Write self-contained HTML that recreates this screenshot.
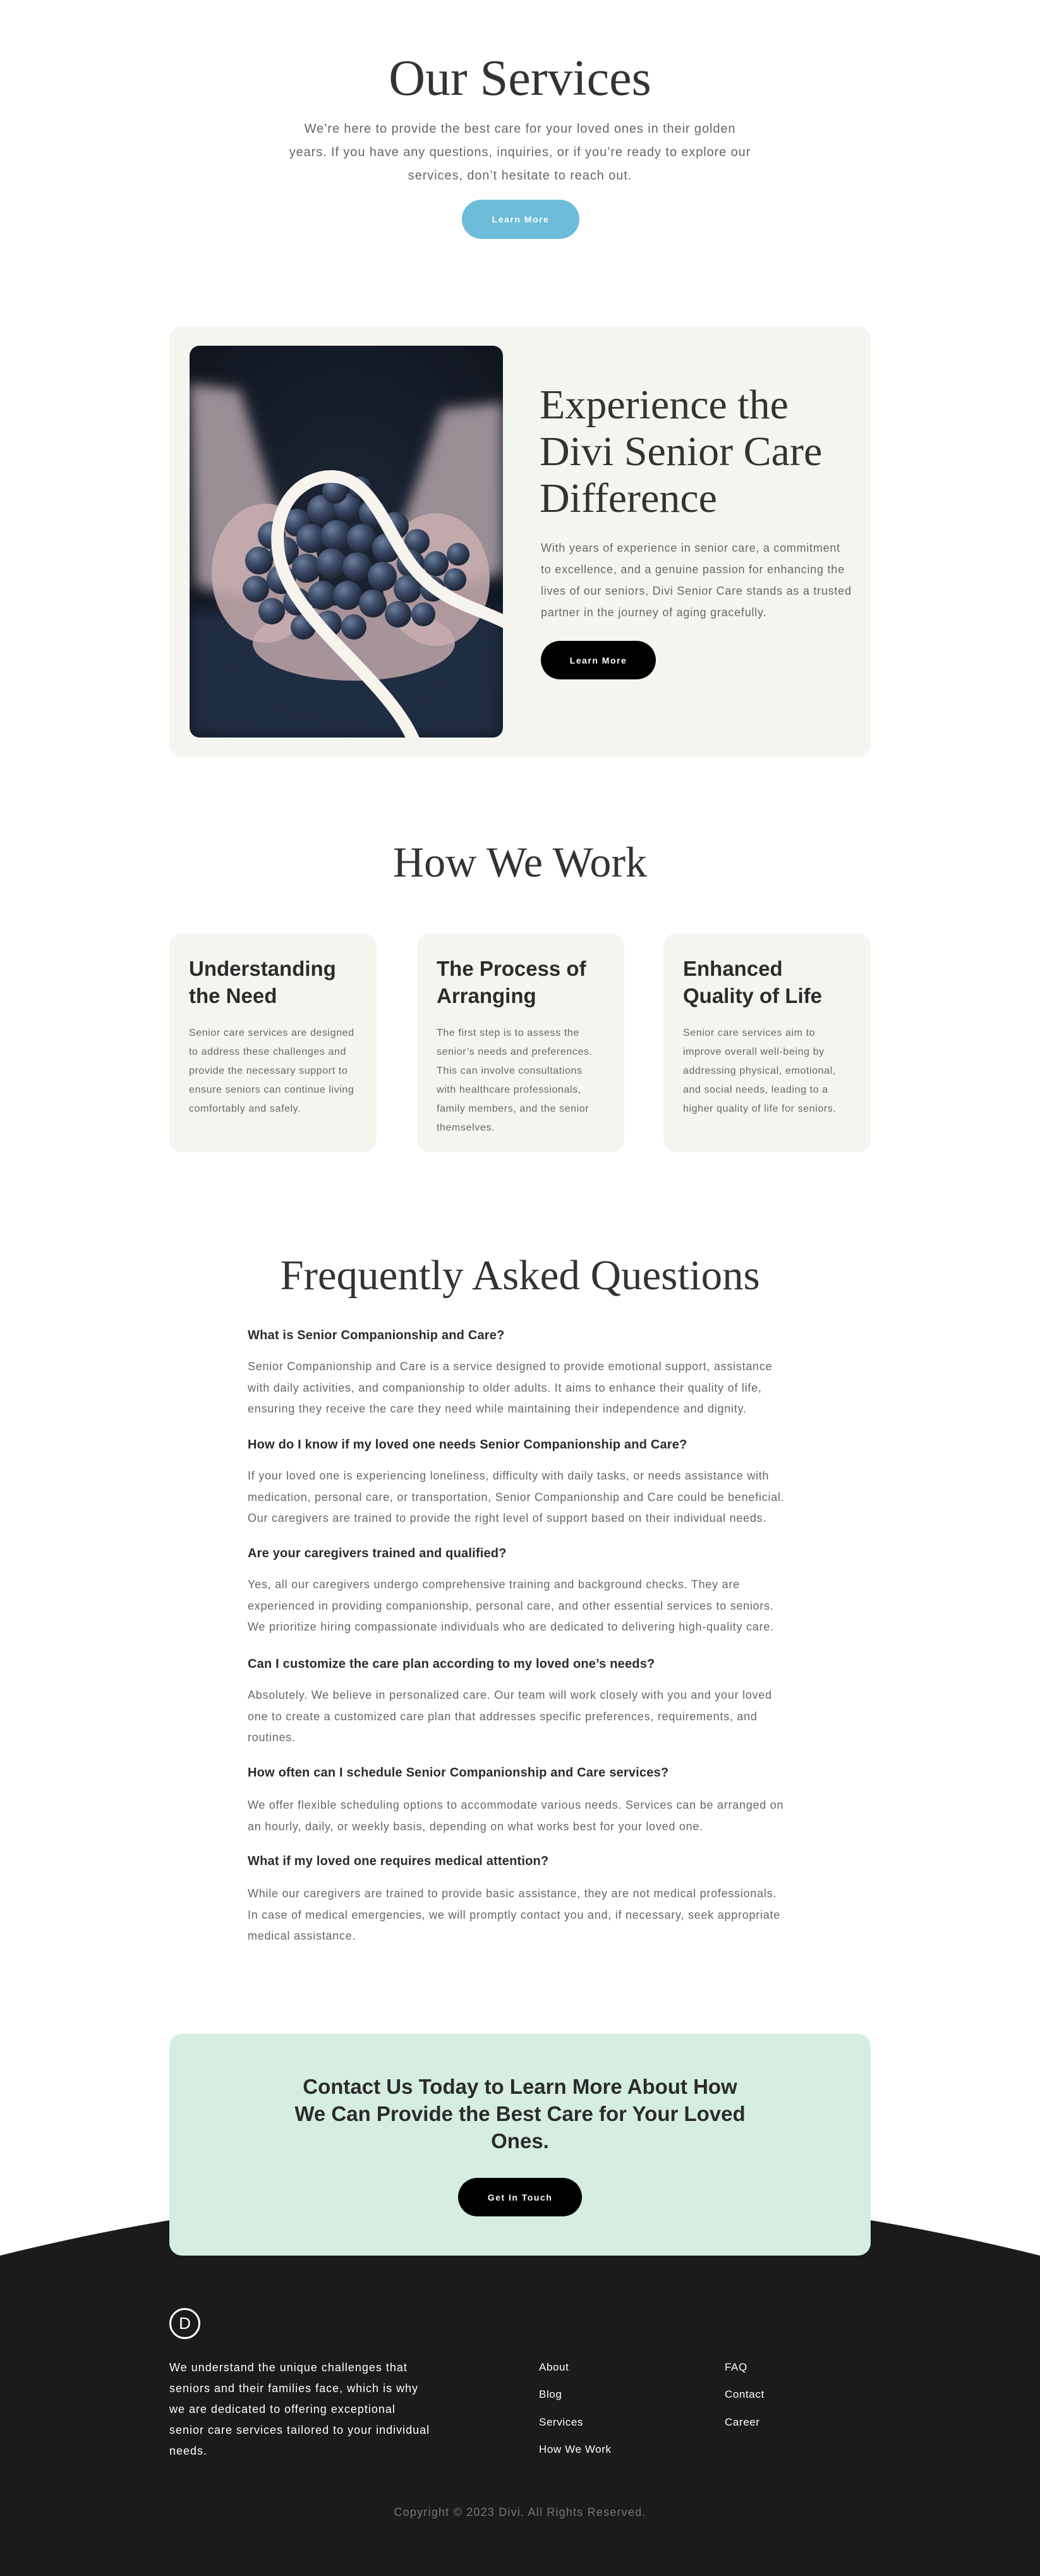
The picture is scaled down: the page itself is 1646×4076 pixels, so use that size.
<!DOCTYPE html>
<html><head><meta charset="utf-8">
<style>
*{margin:0;padding:0;box-sizing:border-box}
html,body{width:1646px;height:4076px;background:#fff;overflow:hidden}
body{position:relative;font-family:"Liberation Sans",sans-serif;color:#333}
.a{position:absolute}
.serif{font-family:"Liberation Serif",serif;font-weight:normal;color:#333}
.c{text-align:center}
.btn{position:absolute;border-radius:31px;color:#fff;font-weight:bold;font-size:14px;letter-spacing:1.5px;display:flex;align-items:center;justify-content:center}
.p{color:#666}
.card{position:absolute;top:1477px;width:328px;height:346px;background:#f5f5f0;border-radius:20px;padding:30px 31px}
.card h3{font-size:33px;font-weight:600;line-height:43px;color:#2b2b2b;margin-top:4px;white-space:nowrap}
.card p{font-size:16px;line-height:30px;color:#666;margin-top:23px;letter-spacing:0.6px;white-space:nowrap}
.q{position:absolute;left:392px;font-size:20px;font-weight:bold;color:#2b2b2b;line-height:24px;letter-spacing:0.2px}
.ans{position:absolute;left:392px;font-size:18px;line-height:33.5px;color:#666;white-space:nowrap;letter-spacing:0.75px}
.fl{position:absolute;color:#fff;font-size:17px;line-height:20px;letter-spacing:0.6px}
</style></head><body>

<div class="a serif c" style="left:0;width:1646px;top:74px;font-size:80px;line-height:100px">Our Services</div>
<div class="a p c" style="left:0;width:1646px;top:186px;font-size:20px;line-height:37px;letter-spacing:0.9px">We’re here to provide the best care for your loved ones in their golden<br>years. If you have any questions, inquiries, or if you’re ready to explore our<br>services, don’t hesitate to reach out.</div>
<div class="btn" style="left:731px;top:316px;width:186px;height:62px;background:#6dbcd9">Learn More</div>

<div class="a" style="left:268px;top:517px;width:1110px;height:681px;background:#f5f5f0;border-radius:20px"></div>
<svg class="a" style="left:300px;top:547px" width="496" height="620" viewBox="0 0 496 620">
<defs>
<clipPath id="cp"><rect width="496" height="620" rx="16"/></clipPath>
<radialGradient id="bg" cx="50%" cy="45%" r="70%"><stop offset="0" stop-color="#1d2535"/><stop offset="1" stop-color="#0f141d"/></radialGradient>
<filter id="bl"><feGaussianBlur stdDeviation="10"/></filter>
<radialGradient id="br" cx="35%" cy="30%" r="70%"><stop offset="0" stop-color="#6d7f9c"/><stop offset="0.5" stop-color="#3b4a66"/><stop offset="1" stop-color="#1e2637"/></radialGradient>
</defs>
<g clip-path="url(#cp)">
<rect width="496" height="620" fill="url(#bg)"/>
<rect y="420" width="496" height="200" fill="#22304a" opacity="0.8" filter="url(#bl)"/>
<g filter="url(#bl)" fill="#9a8e95">
<path d="M0 60 L80 70 L150 300 L90 400 L10 380 Z"/>
<path d="M496 90 L400 100 L330 300 L420 380 L496 360 Z"/>
</g>
<g fill="#c9aeb0">
<ellipse cx="120" cy="360" rx="85" ry="110" opacity="0.85"/>
<ellipse cx="390" cy="370" rx="85" ry="105" opacity="0.85"/>
<ellipse cx="260" cy="470" rx="160" ry="60" opacity="0.8"/>
</g>
<g fill="url(#br)">
<circle cx="130" cy="300" r="22"/><circle cx="170" cy="280" r="22"/><circle cx="210" cy="260" r="24"/><circle cx="250" cy="255" r="22"/><circle cx="290" cy="265" r="22"/><circle cx="325" cy="285" r="22"/><circle cx="360" cy="310" r="20"/>
<circle cx="110" cy="340" r="22"/><circle cx="150" cy="325" r="23"/><circle cx="192" cy="305" r="23"/><circle cx="232" cy="300" r="24"/><circle cx="272" cy="305" r="23"/><circle cx="312" cy="320" r="23"/><circle cx="350" cy="345" r="22"/><circle cx="390" cy="345" r="20"/><circle cx="425" cy="330" r="18"/>
<circle cx="105" cy="385" r="21"/><circle cx="145" cy="370" r="23"/><circle cx="185" cy="352" r="23"/><circle cx="225" cy="345" r="24"/><circle cx="265" cy="350" r="23"/><circle cx="305" cy="365" r="23"/><circle cx="345" cy="385" r="22"/><circle cx="385" cy="385" r="20"/><circle cx="420" cy="370" r="18"/>
<circle cx="130" cy="420" r="21"/><circle cx="170" cy="405" r="22"/><circle cx="210" cy="395" r="23"/><circle cx="250" cy="395" r="23"/><circle cx="290" cy="408" r="22"/><circle cx="330" cy="425" r="21"/><circle cx="370" cy="425" r="19"/>
<circle cx="180" cy="445" r="20"/><circle cx="220" cy="440" r="21"/><circle cx="260" cy="445" r="20"/><circle cx="230" cy="230" r="20"/><circle cx="270" cy="225" r="18"/>
</g>
<path d="M355 625 C310 520,150 430,140 320 C132 240,190 200,236 208 C290 218,310 290,350 345 C395 405,450 412,505 440" fill="none" stroke="#f6f4ec" stroke-width="20"/>
</g>
</svg>
<div class="a serif" style="left:854px;top:604px;font-size:66px;line-height:74px;white-space:nowrap">Experience the<br>Divi Senior Care<br>Difference</div>
<div class="a p" style="left:856px;top:850px;font-size:18px;line-height:34px;letter-spacing:0.75px;white-space:nowrap">With years of experience in senior care, a commitment<br>to excellence, and a genuine passion for enhancing the<br>lives of our seniors, Divi Senior Care stands as a trusted<br>partner in the journey of aging gracefully.</div>
<div class="btn" style="left:856px;top:1014px;width:182px;height:61px;background:#000">Learn More</div>

<div class="a serif c" style="left:0;width:1646px;top:1324px;font-size:68px;line-height:80px">How We Work</div>
<div class="card" style="left:268px"><h3>Understanding<br>the Need</h3><p>Senior care services are designed<br>to address these challenges and<br>provide the necessary support to<br>ensure seniors can continue living<br>comfortably and safely.</p></div>
<div class="card" style="left:660px"><h3>The Process of<br>Arranging</h3><p>The first step is to assess the<br>senior’s needs and preferences.<br>This can involve consultations<br>with healthcare professionals,<br>family members, and the senior<br>themselves.</p></div>
<div class="card" style="left:1050px"><h3>Enhanced<br>Quality of Life</h3><p>Senior care services aim to<br>improve overall well-being by<br>addressing physical, emotional,<br>and social needs, leading to a<br>higher quality of life for seniors.</p></div>

<div class="a serif c" style="left:0;width:1646px;top:1978px;font-size:67px;line-height:80px">Frequently Asked Questions</div>
<div class="q" style="top:2101px">What is Senior Companionship and Care?</div>
<div class="ans" style="top:2146px">Senior Companionship and Care is a service designed to provide emotional support, assistance<br>with daily activities, and companionship to older adults. It aims to enhance their quality of life,<br>ensuring they receive the care they need while maintaining their independence and dignity.</div>
<div class="q" style="top:2274px">How do I know if my loved one needs Senior Companionship and Care?</div>
<div class="ans" style="top:2319px">If your loved one is experiencing loneliness, difficulty with daily tasks, or needs assistance with<br>medication, personal care, or transportation, Senior Companionship and Care could be beneficial.<br>Our caregivers are trained to provide the right level of support based on their individual needs.</div>
<div class="q" style="top:2446px">Are your caregivers trained and qualified?</div>
<div class="ans" style="top:2491px">Yes, all our caregivers undergo comprehensive training and background checks. They are<br>experienced in providing companionship, personal care, and other essential services to seniors.<br>We prioritize hiring compassionate individuals who are dedicated to delivering high-quality care.</div>
<div class="q" style="top:2621px">Can I customize the care plan according to my loved one’s needs?</div>
<div class="ans" style="top:2666px">Absolutely. We believe in personalized care. Our team will work closely with you and your loved<br>one to create a customized care plan that addresses specific preferences, requirements, and<br>routines.</div>
<div class="q" style="top:2793px">How often can I schedule Senior Companionship and Care services?</div>
<div class="ans" style="top:2840px">We offer flexible scheduling options to accommodate various needs. Services can be arranged on<br>an hourly, daily, or weekly basis, depending on what works best for your loved one.</div>
<div class="q" style="top:2933px">What if my loved one requires medical attention?</div>
<div class="ans" style="top:2980px">While our caregivers are trained to provide basic assistance, they are not medical professionals.<br>In case of medical emergencies, we will promptly contact you and, if necessary, seek appropriate<br>medical assistance.</div>

<svg class="a" style="left:0;top:3300px" width="1646" height="776" viewBox="0 0 1646 776">
<path d="M0 269 Q823 64 1646 269 L1646 776 L0 776 Z" fill="#1b1b1b"/>
</svg>
<div class="a" style="left:268px;top:3218px;width:1110px;height:351px;background:#d6eee1;border-radius:20px"></div>
<div class="a c" style="left:268px;width:1110px;top:3280px;font-size:33px;font-weight:600;line-height:43px;color:#2b2b2b">Contact Us Today to Learn More About How<br>We Can Provide the Best Care for Your Loved<br>Ones.</div>
<div class="btn" style="left:725px;top:3446px;width:196px;height:61px;background:#000">Get In Touch</div>

<div class="a" style="left:268px;top:3652px;width:49px;height:49px;border:3px solid #fff;border-radius:50%;color:#fff;font-size:26px;line-height:43px;text-align:center;font-weight:500">D</div>
<div class="fl" style="left:268px;top:3730px;line-height:33px;width:460px;font-size:18px;letter-spacing:1px;white-space:nowrap">We understand the unique challenges that<br>seniors and their families face, which is why<br>we are dedicated to offering exceptional<br>senior care services tailored to your individual<br>needs.</div>
<div class="fl" style="left:853px;top:3736px">About</div>
<div class="fl" style="left:853px;top:3779px">Blog</div>
<div class="fl" style="left:853px;top:3823px">Services</div>
<div class="fl" style="left:853px;top:3866px">How We Work</div>
<div class="fl" style="left:1147px;top:3736px">FAQ</div>
<div class="fl" style="left:1147px;top:3779px">Contact</div>
<div class="fl" style="left:1147px;top:3823px">Career</div>
<div class="a c" style="left:0;width:1646px;top:3965px;font-size:18px;line-height:20px;color:#777;letter-spacing:1.2px">Copyright © 2023 Divi. All Rights Reserved.</div>
</body></html>
